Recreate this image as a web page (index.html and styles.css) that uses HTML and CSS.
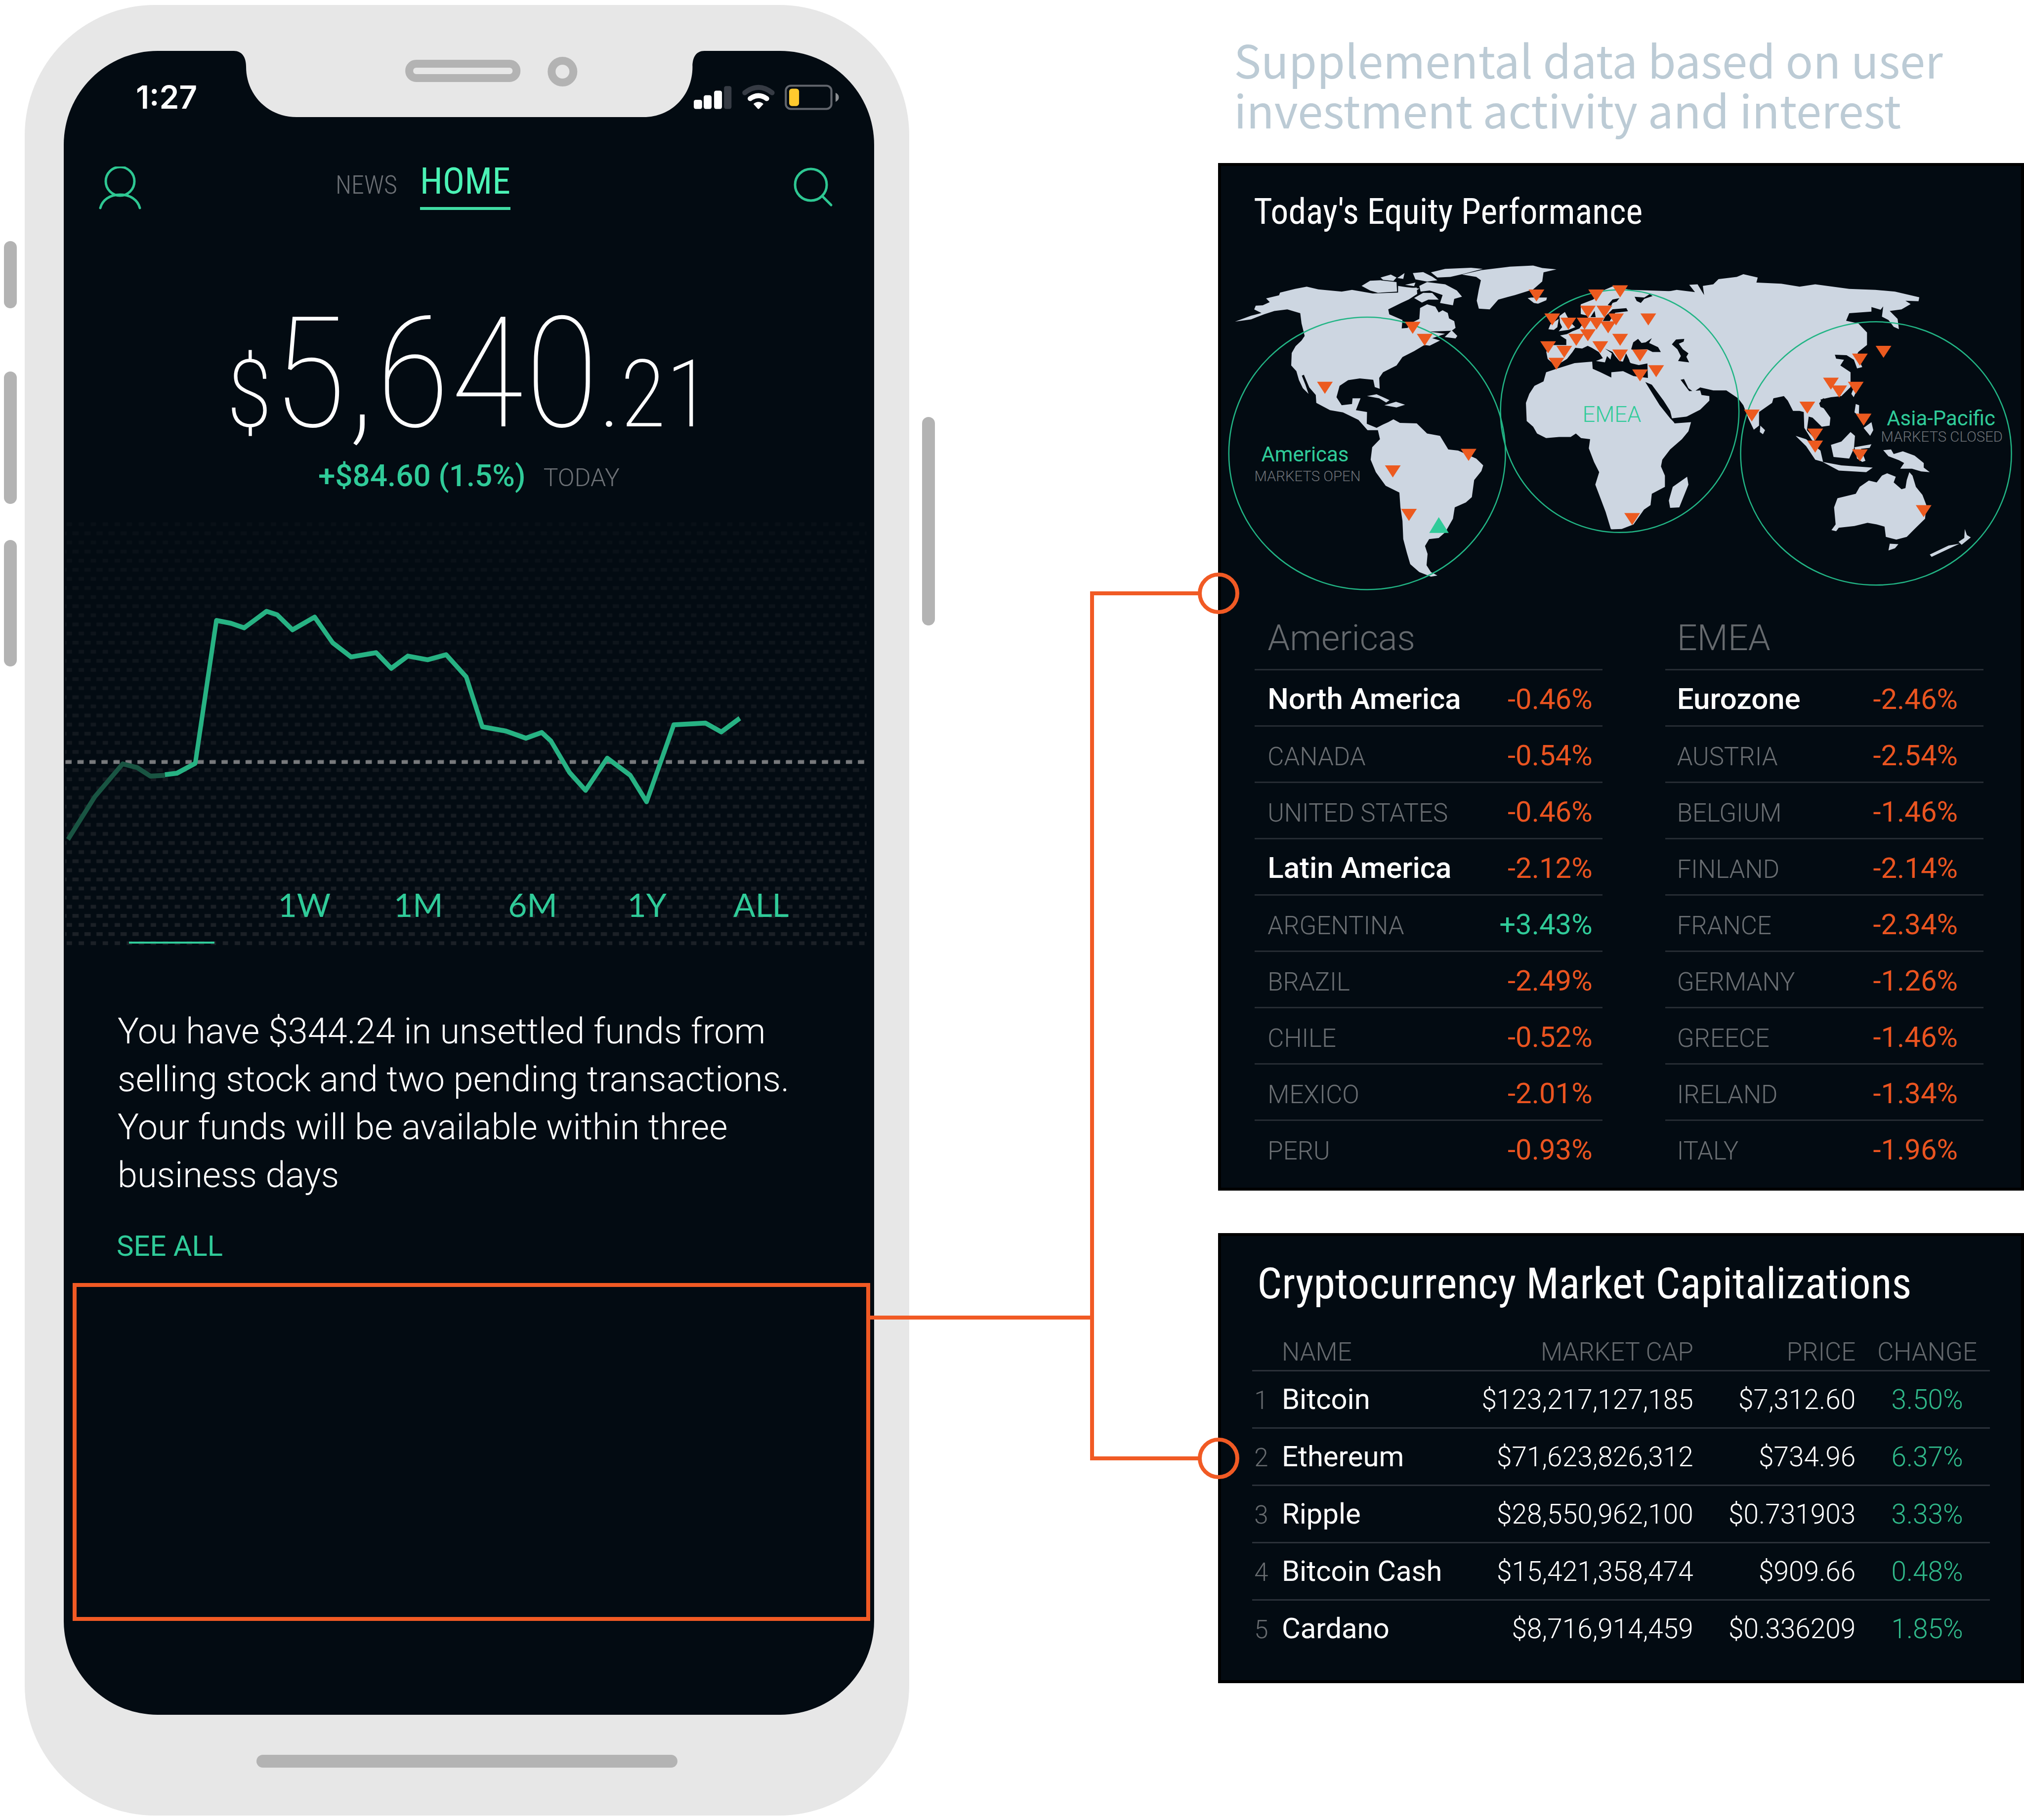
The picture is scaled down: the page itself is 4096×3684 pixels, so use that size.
FILE: index.html
```html
<!DOCTYPE html>
<html lang="en">
<head>
<meta charset="utf-8">
<meta name="viewport" content="width=device-width, initial-scale=1">
<title>Supplemental investment data</title>
<link rel="stylesheet" href="styles.css">
</head>
<body>
<main class="board">

  <section class="device">
    <div class="side side-left">
      <span class="key key-mute"></span>
      <span class="key key-volume-up"></span>
      <span class="key key-volume-down"></span>
    </div>

    <div class="phone">
      <div class="screen">
        <header class="status">
          <time class="clock">1:27</time>
          <svg class="notch" viewBox="0 0 952 134" aria-hidden="true">
            <path fill="#e7e7e7" d="M0-2V0C16 0 25 12 25 32C25 90 70 134 127 134H829C886 134 928 90 928 32C928 12 936 0 952 0V-2Z"/>
            <rect x="355" y="26" width="217" height="29" rx="14" fill="none" stroke="#b3b3b3" stroke-width="16"/>
            <circle cx="665" cy="42" r="22" fill="none" stroke="#b3b3b3" stroke-width="16"/>
          </svg>
          <div class="status-icons">
            <svg class="status-glyphs" viewBox="0 0 354 62" aria-hidden="true">
              <g fill="#fff">
                <rect x="0" y="37" width="20" height="22" rx="5"/>
                <rect x="24" y="26" width="19" height="33" rx="5"/>
                <rect x="49" y="15" width="19" height="44" rx="5"/>
              </g>
              <rect x="73" y="4" width="18" height="55" rx="5" fill="#363b44"/>
              <path d="M123 20Q156-6 189 20" fill="none" stroke="#363b44" stroke-width="12" stroke-linecap="round"/>
              <path d="M136 34Q156 20 176 34" fill="none" stroke="#fff" stroke-width="12" stroke-linecap="round"/>
              <path d="M144 47Q156 37 168 47L158 58Q156 60 154 58Z" fill="#fff"/>
              <rect x="222" y="3" width="110" height="56" rx="12" fill="none" stroke="#62666d" stroke-width="5"/>
              <rect x="230" y="10" width="24" height="42" rx="7" fill="#ffca2e"/>
              <path d="M342 20Q350 24 350 31Q350 38 342 42Z" fill="#8b8e92"/>
            </svg>
          </div>
        </header>

        <nav class="nav">
          <button class="icon-button" type="button" aria-label="Profile">
            <svg viewBox="0 0 90 90"><g fill="none" stroke="#2ec792" stroke-width="5" stroke-linecap="round"><circle cx="43" cy="30" r="29"/><path d="M3 84C7 68 22 57 43 57C64 57 79 68 83 84"/></g></svg>
          </button>
          <div class="tabs">
            <a class="tab" href="#news">NEWS</a>
            <a class="tab tab-active" href="#home" aria-current="page">HOME</a>
          </div>
          <button class="icon-button search" type="button" aria-label="Search">
            <svg viewBox="0 0 90 90"><g fill="none" stroke="#2ec792" stroke-width="5" stroke-linecap="round"><circle cx="41" cy="37" r="32"/><path d="M64 60L82 78"/></g></svg>
          </button>
        </nav>

        <p class="balance"><span class="small">$</span>5,640<span class="small">.21</span></p>
        <p class="change"><strong>+$84.60 (1.5%)</strong><span>TODAY</span></p>

        <div class="chart">
          <svg class="plot" viewBox="154 1250 1957 1032" role="img" aria-label="Portfolio value">
            <defs>
              <pattern id="dots" width="29" height="44" patternUnits="userSpaceOnUse">
                <rect x="1" y="6" width="15" height="9" fill="#1c2127"/>
                <rect x="16" y="28" width="13" height="9" fill="#1c2127"/>
              </pattern>
              <linearGradient id="fade" x1="0" y1="0" x2="0" y2="1">
                <stop offset="0" stop-color="#030b12" stop-opacity=".8"/>
                <stop offset="1" stop-color="#030b12" stop-opacity="0"/>
              </linearGradient>
            </defs>
            <rect x="157" y="1250" width="1936" height="1032" fill="url(#dots)"/>
            <rect x="154" y="1250" width="1957" height="1032" fill="url(#fade)"/>
            <path d="M158 1839H2090" stroke="#77797c" stroke-width="9" stroke-dasharray="15 14"/>
            <g transform="translate(140 1220) scale(.6378 .6888)" fill="none" stroke-width="17" stroke-linejoin="round">
              <path stroke="#195442" d="M38 1170L140 1020L245 905L300 918L350 948L405 945"/>
              <path stroke="#27b283" d="M405 943L450 938L520 903L600 402L655 412L705 428L790 370L830 382L888 435L972 390L1040 480L1110 530L1205 515L1262 570L1325 527L1400 540L1470 522L1546 600L1607 775L1697 790L1772 815L1832 795L1867 825L1937 935L1998 998L2080 885L2167 945L2229 1038L2332 768L2452 762L2512 793L2582 745"/>
            </g>
          </svg>
          <div class="ranges">
            <button class="range range-active" type="button" aria-label="1D"></button>
            <button class="range" type="button">1W</button>
            <button class="range" type="button">1M</button>
            <button class="range" type="button">6M</button>
            <button class="range" type="button">1Y</button>
            <button class="range" type="button">ALL</button>
          </div>
        </div>

        <p class="notice">You have $344.24 in unsettled funds from<br>selling stock and two pending transactions.<br>Your funds will be available within three<br>business days</p>
        <a class="see-all" href="#activity">SEE ALL</a>
        <div class="slot"></div>
      </div>
      <span class="home-bar"></span>
    </div>

    <div class="side side-right"><span class="key key-power"></span></div>
  </section>

  <section class="data">
    <h1 class="headline">Supplemental data based on user<br>investment activity and interest</h1>

    <article class="panel equity">
      <h2 class="equity-title">Today's Equity Performance</h2>
      <svg class="map" viewBox="2944 600 1946 860" role="img" aria-label="Market map">
        <defs><path id="down" fill="#ec5a1f" d="M-19 0H19L0 29Z"/></defs>
        <g fill="#cdd6e1">
          <g transform="translate(2930 600) scale(.625 .5485)">
            <path d="M88 322L150 296L190 284L162 268L168 252L195 250L222 236L208 220L258 206L262 194L320 178L365 168L410 180L500 190L540 182L620 198L720 194L740 178L790 172L792 200L760 224L730 240L680 268L684 290L735 315L732 352L755 350L765 330L800 310L803 262L830 246L862 256L875 282L890 272L910 284L915 308L935 320L940 350L925 362L840 366L900 376L850 395L880 405L840 428L820 425L780 452L735 478L712 515L660 545L645 570L647 618L628 610L622 578L570 572L525 580L492 605L480 655L500 690L540 685L542 660L573 660L555 712L598 720L597 772L635 790L660 775L680 765L700 752L725 768L790 770L830 815L880 825L912 885L950 890L1020 925L1047 955L1040 980L1012 1020L1003 1095L980 1118L937 1140L930 1190L900 1250L875 1275L838 1280L822 1310L832 1345L828 1395L845 1425L870 1440L845 1445L800 1425L765 1390L752 1340L738 1280L735 1200L727 1140L723 1075L670 1045L632 985L612 930L618 875L648 840L640 800L600 800L565 755L505 722L455 712L402 680L400 645L375 612L354 556L346 560L360 600L372 640L350 615L335 580L325 540L305 515L307 460L322 430L345 405L357 385L345 330L340 285L290 268L240 275L200 290L150 312Z"/>
            <path d="M898 390L925 360L947 385L940 396ZM577 165L610 142L650 140L712 148L714 190L640 195L610 185ZM650 128L690 115L712 128L700 143L660 138ZM715 130L743 108L738 134ZM745 160L785 150L780 166ZM775 108L815 104L850 124L870 140L830 146L785 136ZM718 165L750 170L800 176L770 200L718 196ZM800 165L830 148L900 158L945 185L965 212L935 222L930 250L880 240L890 205L840 185L805 190ZM780 218L815 195L850 196L875 225L835 225L810 238ZM845 105L900 90L1000 85L1045 90L970 112L920 125L870 128ZM965 115L1040 95L1150 80L1240 75L1275 86L1330 92L1280 105L1275 145L1240 180L1170 205L1105 225L1072 268L1030 265L1022 230L1030 180L1038 140L1020 125ZM598 650L635 642L685 668L672 678L645 660ZM665 690L710 675L745 688L712 700Z"/>
            <path d="M1572 550L1545 570L1500 545L1470 530L1468 498L1400 505L1330 530L1290 545L1280 585L1245 605L1225 640L1212 680L1215 760L1240 785L1255 815L1290 835L1340 830L1385 830L1405 815L1425 835L1460 840L1455 880L1475 940L1495 985L1480 1040L1500 1100L1520 1160L1540 1235L1572 1235Z"/>
          </g>
          <g transform="translate(3900 600) scale(.6314 .5485)">
            <path d="M-10 1237V545L35 540L75 562L130 570L128 505L60 500V200L130 205L180 195L240 182L310 192L288 160L320 158L345 205L340 165L380 158L400 135L470 125L495 113L550 128L545 150L640 155L710 168L770 158L900 178L1000 182L1075 190L1168 215L1165 232L1115 230L1135 245L1100 268L1055 275L1085 310L1090 355L1070 345L1050 315L1025 300L1030 255L1020 270L985 258L985 278L900 285L888 318L935 330L968 370L968 425L935 455L928 470L950 522L930 528L918 490L890 470L845 468L850 485L880 490L866 515L905 545L905 610L870 650L830 655L790 665L800 700L828 745L825 780L795 785L760 745L745 740L738 800L762 830L778 870L755 840L728 790L726 720L710 715L685 715L665 670L650 650L610 660L605 680L555 720L555 780L535 798L515 750L495 690L475 660L430 625L380 625L330 612L305 632L285 615L268 575L255 578L288 628L330 625L335 645L365 650L365 670L330 710L270 745L225 755L232 770L295 765L285 805L260 840L215 885L185 930L180 960L195 1000L195 1050L145 1080L140 1130L115 1150L75 1215L30 1235Z"/>
            <path d="M280 1005L285 1040L250 1140L215 1142L210 1110L225 1050ZM560 780L578 800L570 818L558 808ZM915 620L927 630L917 655L908 640ZM925 685L938 690L937 725L950 745L935 735L920 722ZM955 790L985 765L992 800L980 825L962 800ZM695 825L735 840L790 890L800 940L770 930L735 870ZM798 940L870 955L990 965L965 985L860 978ZM830 865L870 850L905 808L922 825L918 880L900 925L840 918ZM920 875L985 862L978 878L945 882L962 935L950 940L930 925ZM1030 888L1060 885L1070 905L1105 893L1150 912L1185 945L1185 965L1208 985L1175 982L1140 970L1095 970L1110 945L1090 932L1050 915ZM832 1240L848 1215L842 1140L855 1100L925 1080L940 1050L975 1022L1005 1030L1025 1000L1045 990L1078 1005L1070 1030L1100 1060L1115 1055L1120 1020L1130 985L1142 1000L1155 1050L1180 1085L1195 1130L1190 1190L1150 1235L1120 1270L1080 1282L1040 1270L1035 1225L1005 1215L970 1208L920 1222L860 1230L850 1245ZM1055 1300L1088 1302L1075 1320L1050 1330ZM1342 1235L1350 1262L1365 1272L1330 1305L1318 1292L1340 1275ZM1322 1300L1215 1358L1208 1348L1280 1308Z"/>
          </g>
          <g transform="translate(3640 620) scale(.3333)">
            <path d="M155 300L180 295L295 295L290 315L230 340L200 335ZM540 345L630 310L700 245L770 215L900 240L1200 250V870L1040 800V770L960 785L900 770L885 735L868 700L845 760L820 755L790 720L770 690L715 665L765 700L755 745L730 720L715 765L650 755L700 735L670 690L620 660L590 645L550 665L500 660L480 690L440 740L400 765L340 775L300 740L290 690L310 640H435V600L390 570L440 560L480 540L530 520L560 480L600 430L540 415ZM385 430L425 400L440 430L470 480L500 510L450 530L380 540L405 510L390 480ZM305 525L320 490L380 450L370 510L345 530Z"/>
          </g>
        </g>
        <g fill="#030b12">
          <path transform="translate(3900 600) scale(.6314 .5485)" d="M120 588L145 600L190 670L215 715L222 748L295 738L292 748L232 768L215 748L175 690L148 640ZM785 682L800 660L832 668L828 690L808 706L790 698Z"/>
          <path transform="translate(3640 620) scale(.3333)" d="M700 465L720 430L770 380L870 372L882 395L790 405L765 440L750 465ZM735 350L770 310L820 300L800 325L770 335L760 355ZM905 670L920 620L955 595L980 625L1010 620L1055 590L1035 625L1100 655L1120 690L1060 690L1020 670L920 675ZM1200 635L1230 600L1290 595L1285 615L1250 630L1280 670L1320 700L1305 725L1325 765L1245 755L1265 720L1240 670ZM930 290L1000 295L1040 270L1060 285L1000 305L975 335L945 320ZM610 438L640 392L648 438Z"/>
        </g>
        <g fill="none" stroke="#22b585" stroke-width="3">
          <ellipse cx="3304" cy="1095" rx="334" ry="329"/>
          <ellipse cx="3914" cy="993" rx="288" ry="293"/>
          <ellipse cx="4533" cy="1095" rx="327" ry="318"/>
        </g>
        <use href="#down" x="3414" y="777"/><use href="#down" x="3443" y="806"/><use href="#down" x="3202" y="922"/>
        <use href="#down" x="3549" y="1084"/><use href="#down" x="3366" y="1124"/><use href="#down" x="3405" y="1229"/>
        <use href="#down" x="3713" y="699"/><use href="#down" x="3857" y="699"/><use href="#down" x="3915" y="689"/>
        <use href="#down" x="3837" y="738"/><use href="#down" x="3877" y="738"/><use href="#down" x="3751" y="757"/>
        <use href="#down" x="3905" y="757"/><use href="#down" x="3983" y="757"/><use href="#down" x="3790" y="767"/>
        <use href="#down" x="3829" y="767"/><use href="#down" x="3858" y="767"/><use href="#down" x="3886" y="776"/>
        <use href="#down" x="3837" y="795"/><use href="#down" x="3809" y="806"/><use href="#down" x="3915" y="806"/>
        <use href="#down" x="3741" y="824"/><use href="#down" x="3867" y="824"/><use href="#down" x="3780" y="835"/>
        <use href="#down" x="3915" y="844"/><use href="#down" x="3963" y="844"/><use href="#down" x="3761" y="864"/>
        <use href="#down" x="4002" y="882"/><use href="#down" x="3963" y="892"/><use href="#down" x="3944" y="1239"/>
        <use href="#down" x="4233" y="989"/><use href="#down" x="4367" y="970"/><use href="#down" x="4386" y="1035"/>
        <use href="#down" x="4386" y="1064"/><use href="#down" x="4424" y="912"/><use href="#down" x="4444" y="931"/>
        <use href="#down" x="4484" y="922"/><use href="#down" x="4494" y="854"/><use href="#down" x="4551" y="835"/>
        <use href="#down" x="4503" y="999"/><use href="#down" x="4494" y="1085"/><use href="#down" x="4648" y="1220"/>
        <path d="M3454 1287H3501L3477 1249Z" fill="#30cb99"/>
        <g text-anchor="middle">
          <text class="region" x="3154" y="1114">Americas</text>
          <text class="market" x="3160" y="1162">MARKETS OPEN</text>
          <text class="region region-light" x="3895" y="1019">EMEA</text>
          <text class="region" x="4690" y="1027">Asia-Pacific</text>
          <text class="market" x="4692" y="1067">MARKETS CLOSED</text>
        </g>
      </svg>

      <div class="regions">
        <table class="returns">
          <thead><tr><th colspan="2" scope="colgroup">Americas</th></tr></thead>
          <tbody>
            <tr class="group"><th scope="row">North America</th><td>-0.46%</td></tr>
            <tr><th scope="row">CANADA</th><td>-0.54%</td></tr>
            <tr><th scope="row">UNITED STATES</th><td>-0.46%</td></tr>
            <tr class="group"><th scope="row">Latin America</th><td>-2.12%</td></tr>
            <tr><th scope="row">ARGENTINA</th><td class="up">+3.43%</td></tr>
            <tr><th scope="row">BRAZIL</th><td>-2.49%</td></tr>
            <tr><th scope="row">CHILE</th><td>-0.52%</td></tr>
            <tr><th scope="row">MEXICO</th><td>-2.01%</td></tr>
            <tr><th scope="row">PERU</th><td>-0.93%</td></tr>
          </tbody>
        </table>
        <table class="returns returns-emea">
          <thead><tr><th colspan="2" scope="colgroup">EMEA</th></tr></thead>
          <tbody>
            <tr class="group"><th scope="row">Eurozone</th><td>-2.46%</td></tr>
            <tr><th scope="row">AUSTRIA</th><td>-2.54%</td></tr>
            <tr><th scope="row">BELGIUM</th><td>-1.46%</td></tr>
            <tr><th scope="row">FINLAND</th><td>-2.14%</td></tr>
            <tr><th scope="row">FRANCE</th><td>-2.34%</td></tr>
            <tr><th scope="row">GERMANY</th><td>-1.26%</td></tr>
            <tr><th scope="row">GREECE</th><td>-1.46%</td></tr>
            <tr><th scope="row">IRELAND</th><td>-1.34%</td></tr>
            <tr><th scope="row">ITALY</th><td>-1.96%</td></tr>
          </tbody>
        </table>
      </div>
    </article>

    <article class="panel crypto">
      <h2 class="crypto-title">Cryptocurrency Market Capitalizations</h2>
      <table class="coins">
        <colgroup><col class="col-rank"><col class="col-name"><col class="col-cap"><col class="col-price"><col class="col-change"></colgroup>
        <thead>
          <tr><td></td><th class="name" scope="col">NAME</th><th scope="col">MARKET CAP</th><th scope="col">PRICE</th><th class="gain" scope="col">CHANGE</th></tr>
        </thead>
        <tbody>
          <tr><td class="rank">1</td><th class="name" scope="row">Bitcoin</th><td>$123,217,127,185</td><td>$7,312.60</td><td class="gain">3.50%</td></tr>
          <tr><td class="rank">2</td><th class="name" scope="row">Ethereum</th><td>$71,623,826,312</td><td>$734.96</td><td class="gain">6.37%</td></tr>
          <tr><td class="rank">3</td><th class="name" scope="row">Ripple</th><td>$28,550,962,100</td><td>$0.731903</td><td class="gain">3.33%</td></tr>
          <tr><td class="rank">4</td><th class="name" scope="row">Bitcoin Cash</th><td>$15,421,358,474</td><td>$909.66</td><td class="gain">0.48%</td></tr>
          <tr><td class="rank">5</td><th class="name" scope="row">Cardano</th><td>$8,716,914,459</td><td>$0.336209</td><td class="gain">1.85%</td></tr>
        </tbody>
      </table>
    </article>
  </section>

  <svg class="connector" viewBox="0 0 4096 3684" aria-hidden="true">
    <g fill="none" stroke="#f15a24" stroke-width="8">
      <path d="M1758 2667H2210M2428 1201H2210V2952H2428"/>
      <circle cx="2466" cy="1201" r="38"/>
      <circle cx="2466" cy="2952" r="38"/>
    </g>
  </svg>
</main>
</body>
</html>
```
FILE: styles.css
```css
* { box-sizing: border-box; }

body {
  margin: 0;
  background: #fff;
  color: #fff;
  font-family: Roboto, "Liberation Sans", sans-serif;
  font-weight: 300;
}

h1, h2, p { margin: 0; font-weight: 300; }
a { color: inherit; text-decoration: none; }
button { padding: 0; border: 0; background: none; color: inherit; font: inherit; cursor: pointer; }
svg { display: block; }
table { width: 100%; border-collapse: collapse; table-layout: fixed; }
th { font-weight: 300; text-align: left; }
th, td { padding: 0; }

.board {
  position: relative;
  display: grid;
  grid-template-columns: minmax(0, 1891fr) minmax(0, 1630fr);
  column-gap: 14%;
  align-items: start;
}

/* Handset */
.device {
  display: grid;
  grid-template-columns: 50px minmax(0, 1fr) 52px;
  padding: 10px 0 11px;
}
.side { display: flex; flex-direction: column; }
.side-left { padding: 478px 0 0 8px; }
.side-right { padding: 834px 0 0 26px; }
.key { width: 26px; border-radius: 13px; background: #b3b3b3; }
.key-mute { height: 136px; }
.key-volume-up { height: 268px; margin-top: 128px; }
.key-volume-down { height: 256px; margin-top: 73px; }
.key-power { height: 422px; }

.phone {
  display: flex;
  flex-direction: column;
  align-items: stretch;
  padding: 93px 71px 97px 79px;
  border-radius: 264px;
  background: #e7e7e7;
}
.home-bar {
  align-self: center;
  width: 52%;
  height: 26px;
  margin: 81px 8px 0 0;
  border-radius: 13px;
  background: #b3b3b3;
}
.screen {
  overflow: hidden;
  padding-bottom: 190px;
  border-radius: 190px;
  background: #030b12;
}

.status { display: grid; grid-template-columns: minmax(0, 344fr) minmax(0, 952fr) minmax(0, 343fr); }
.notch { width: 100%; overflow: visible; }
.clock {
  padding: 58px 0 0 146px;
  font: 600 64px/72px Inter, sans-serif;
}
.status-icons {
  display: flex;
  justify-content: flex-end;
  align-items: flex-start;
  padding: 68px 68px 0 0;
}
.status-glyphs { flex: none; width: 297px; }

.nav {
  display: flex;
  align-items: flex-start;
  padding: 88px 79px 0 71px;
}
.icon-button { width: 90px; height: 90px; margin-top: 12px; }
.search { margin-left: auto; }
.tabs {
  display: flex;
  align-items: baseline;
  gap: 46px;
  margin-left: 389px;
  font-family: "Roboto Condensed", Roboto, sans-serif;
}
.tab { color: #6d7176; font-size: 52px; line-height: 84px; }
.tab-active {
  padding-bottom: 10px;
  border-bottom: 6px solid #40dca4;
  color: #4bf3b5;
  font-size: 74px;
  font-weight: 400;
}

.balance {
  margin-top: 170px;
  font: 100 312px/320px "Roboto Condensed", Roboto, sans-serif;
  text-align: center;
  white-space: nowrap;
}
.small { font-size: 190px; font-weight: 200; line-height: 100px; }
.change {
  display: flex;
  justify-content: center;
  align-items: baseline;
  gap: 36px;
  margin-top: 10px;
  font-size: 62px;
  line-height: 72px;
}
.change strong { color: #30cb99; font-weight: 500; }
.change span { color: #6d7176; font-size: 50px; }

.chart { display: grid; margin-top: 46px; }
.plot, .ranges { grid-area: 1 / 1; }
.plot { width: 100%; }
.ranges {
  display: grid;
  grid-template-columns: 173fr 66fr repeat(5, 231fr);
  align-self: end;
  padding: 0 113px 4px 132px;
}
.range {
  height: 116px;
  padding-bottom: 42px;
  color: #30cb99;
  font: 400 66px/74px Lato, sans-serif;
  text-align: center;
}
.range-active { border-bottom: 4px solid #30cb99; }
.range-active + .range { grid-column: 3; }

.notice {
  margin-top: 125px;
  padding: 0 0 0 109px;
  font-size: 72px;
  line-height: 97px;
  white-space: nowrap;
}
.see-all {
  display: block;
  width: fit-content;
  margin: 61px 0 0 107px;
  color: #30cb99;
  font-size: 58px;
  font-weight: 400;
  line-height: 68px;
}
.slot {
  height: 684px;
  margin: 41px 8px 0 18px;
  border: 8px solid #f15a24;
}

/* Data column */
.headline {
  padding: 68px 0 0 32px;
  color: #bccbd5;
  font: 400 92px/101px "Noto Sans CJK SC", "Noto Sans", sans-serif;
  white-space: nowrap;
}
.panel { background: #030b12; box-shadow: inset 0 0 0 6px #000; }
.equity { margin-top: 60px; padding-bottom: 28px; }
.equity-title {
  padding: 57px 0 0 72px;
  font: 400 72px/84px "Roboto Condensed", Roboto, sans-serif;
}
.map { width: 100%; margin-top: 32px; }
.region { fill: #30cb99; font: 400 50px Roboto, sans-serif; }
.region-light { font-size: 54px; font-weight: 300; }
.market { fill: #6d7176; font: 300 35px Roboto, sans-serif; }

.regions {
  display: grid;
  grid-template-columns: minmax(0, 703fr) minmax(0, 644fr);
  align-items: start;
  gap: 127px;
  padding: 0 82px 0 74px;
}
.returns tr { height: 114px; border-bottom: 3px solid #262c33; }
.returns tbody tr:last-child { border-bottom: 0; }
.returns thead tr { height: 132px; }
.returns thead th { padding: 6px 0 0 26px; color: #666a6e; font-size: 72px; line-height: 84px; }
.returns tbody th, .returns td { padding-top: 22px; line-height: 72px; vertical-align: baseline; white-space: nowrap; }
.returns tbody th { width: 64%; padding-left: 26px; color: #6a6e72; font-size: 51px; }
.returns .group th { color: #fff; font-size: 60px; font-weight: 500; }
.returns td { padding-right: 20px; color: #ea5420; font-size: 58px; font-weight: 400; text-align: right; }
.returns .up { color: #30cb99; }
.returns-emea thead th, .returns-emea tbody th { padding-left: 24px; }
.returns-emea td { padding-right: 52px; }

.crypto { margin-top: 86px; padding: 0 69px 52px; }
.crypto-title {
  padding: 51px 0 0 10px;
  font: 400 88px/102px "Roboto Condensed", Roboto, sans-serif;
  white-space: nowrap;
}
.coins { margin-top: 42px; }
.col-rank { width: 4%; }
.col-name { width: 27%; }
.col-cap { width: 30%; }
.col-price { width: 22%; }
.col-change { width: 17%; }
.coins tr { height: 116px; border-bottom: 3px solid #2b3139; }
.coins thead tr { height: 84px; }
.coins tbody tr:last-child { border-bottom: 0; }
.coins th, .coins td { padding-right: 18px; text-align: right; vertical-align: baseline; white-space: nowrap; }
.coins thead th { padding-top: 16px; color: #666a6e; font-size: 51px; line-height: 60px; }
.coins tbody th, .coins tbody td { padding-top: 20px; font-size: 55px; line-height: 72px; }
.coins tbody .name { font-size: 58px; font-weight: 400; }
.coins .name { text-align: left; }
.coins tbody .rank { padding: 0 0 0 4px; color: #666a6e; font-size: 51px; text-align: left; }
.coins .gain { padding-right: 0; text-align: center; }
.coins td.gain { color: #30b98a; }

.connector {
  position: absolute;
  top: 0;
  left: 0;
  width: 100%;
  pointer-events: none;
}
```
